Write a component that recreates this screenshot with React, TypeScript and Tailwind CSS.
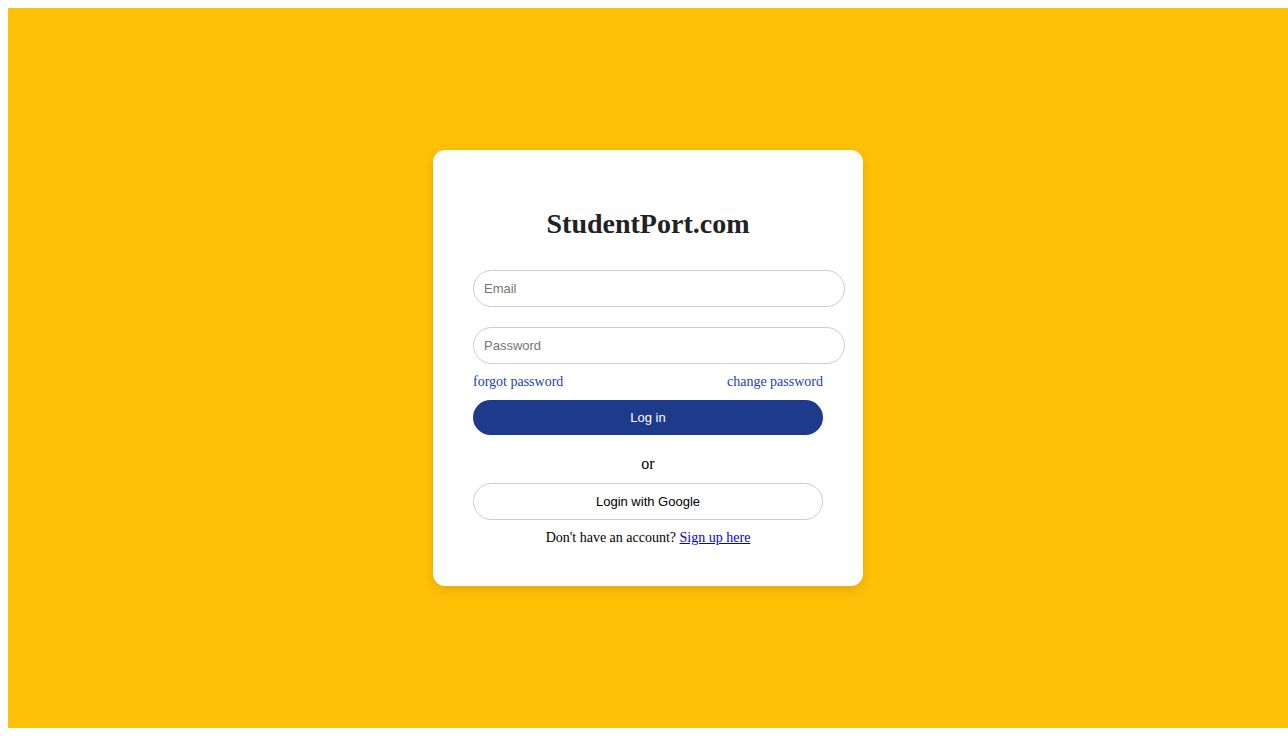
import React from "react";

export default function App() {
  return (
    <div className="w-[1288px] h-[736px] overflow-hidden bg-white pt-2 pl-2">
      <div className="w-[1280px] h-[720px] bg-[#ffc107] flex items-center justify-center">
        <div className="w-[430px] bg-white rounded-[12px] shadow-[0_4px_12px_rgba(0,0,0,0.12)] px-10 pt-[58px] pb-[40px] flex flex-col items-start">
          <h1 className="w-full text-center text-[28px] leading-[32px] font-bold text-[#222222] font-['Liberation_Serif',serif]">
            StudentPort.com
          </h1>
          <input
            type="email"
            placeholder="Email"
            className="mt-[30px] w-[372px] h-[37px] rounded-[20px] border border-[#cccccc] px-[10px] text-[13px] font-['Liberation_Sans',Arial,sans-serif] placeholder:text-[#757575] outline-none"
          />
          <input
            type="password"
            placeholder="Password"
            className="mt-5 w-[372px] h-[37px] rounded-[20px] border border-[#cccccc] px-[10px] text-[13px] font-['Liberation_Sans',Arial,sans-serif] placeholder:text-[#757575] outline-none"
          />
          <div className="mt-[10px] w-full flex justify-between text-[14px] leading-[16px] text-[#1e40af] font-['Liberation_Serif',serif]">
            <span>forgot password</span>
            <span>change password</span>
          </div>
          <button className="mt-[10px] w-full h-[35px] rounded-[20px] bg-[#1e3a8a] text-white text-[13px] font-['Liberation_Sans',Arial,sans-serif]">
            Log in
          </button>
          <p className="mt-5 w-full text-center text-[16px] leading-[18px] text-black font-['Liberation_Serif',serif]">
            or
          </p>
          <button className="mt-[10px] w-full h-[37px] rounded-[20px] bg-white border border-[#cccccc] text-black text-[13px] font-['Liberation_Sans',Arial,sans-serif]">
            Login with Google
          </button>
          <p className="mt-[10px] w-full text-center text-[14px] leading-[16px] text-black font-['Liberation_Serif',serif]">
            Don't have an account?{" "}
            <a href="#" className="text-[#0000ee] underline">
              Sign up here
            </a>
          </p>
        </div>
      </div>
    </div>
  );
}
